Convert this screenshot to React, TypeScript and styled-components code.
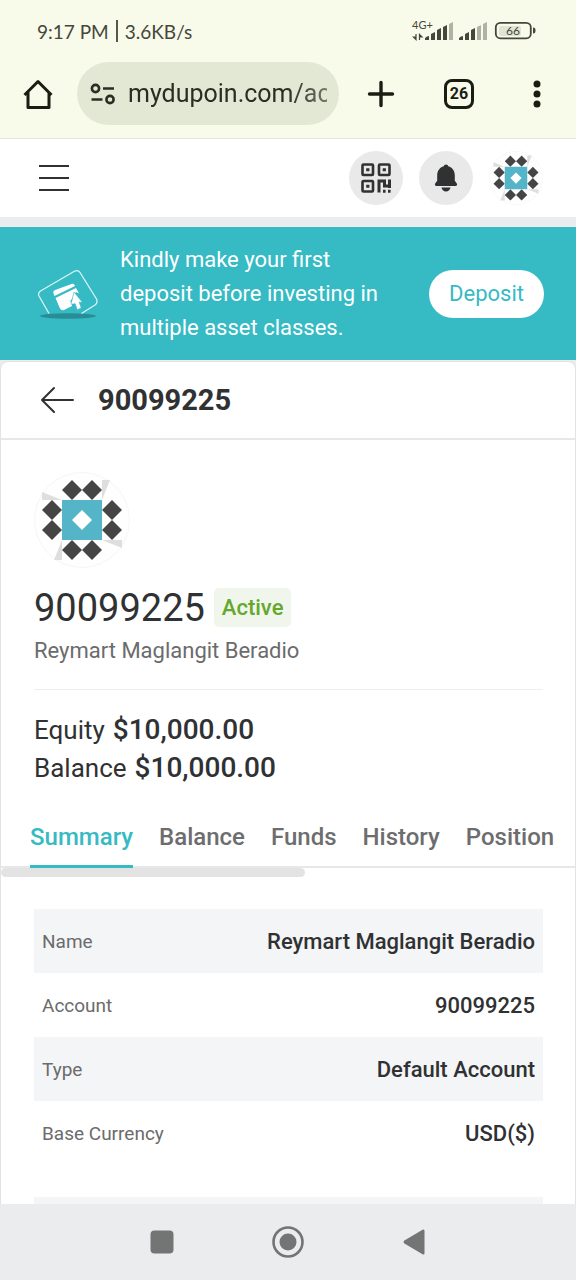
import React, { useState } from "react";
import styled, { createGlobalStyle } from "styled-components";

const GlobalStyle = createGlobalStyle`
  *, *::before, *::after { box-sizing: border-box; }
  body {
    margin: 0;
    font-family: Roboto, "Liberation Sans", sans-serif;
    color: #303133;
    background: #ebecee;
  }
  button { font-family: inherit; padding: 0; border: 0; background: none; color: inherit; cursor: pointer; }
  h1, h2, p { margin: 0; }
  svg { display: block; }
`;

const teal = "#36bac4";

const Screen = styled.div`
  height: 100vh;
  display: flex;
  flex-direction: column;
`;

const BrowserChrome = styled.header`
  background: #f8faea;
  border-bottom: 1px solid #e4e6dc;
  color: #1b1d12;
`;

const StatusBar = styled.div`
  height: 62px;
  padding: 0 40px 0 37px;
  display: flex;
  align-items: center;
  justify-content: space-between;
  font-family: Lato, sans-serif;
  font-size: 19px;
  color: #45473c;
`;

const Clock = styled.div`
  display: flex;
  align-items: center;
  gap: 7px;
`;

const ClockRule = styled.span`
  width: 2px;
  height: 22px;
  background: #55574c;
`;

const AddressRow = styled.div`
  display: flex;
  align-items: center;
  padding: 0 23px 13px 22px;
`;

const IconButton = styled.button`
  width: 32px;
  height: 32px;
  display: grid;
  place-items: center;
`;

const AddressPill = styled.div`
  flex: 1;
  min-width: 0;
  height: 63px;
  margin: 0 26px 0 23px;
  padding: 0 12px 0 13px;
  border-radius: 32px;
  background: #e3e8d5;
  display: flex;
  align-items: center;
  gap: 12px;
`;

const AddressInput = styled.input`
  flex: 1;
  min-width: 0;
  padding: 0;
  border: 0;
  outline: 0;
  background: none;
  font-family: Roboto, sans-serif;
  font-size: 25px;
  color: #2b2d22;
  mask-image: linear-gradient(to right, #000 80%, rgba(0, 0, 0, 0.6));
`;

const BrowserActions = styled.div`
  display: flex;
  gap: 46px;
`;

const TabCount = styled.button`
  width: 30px;
  height: 30px;
  margin: 1px;
  border: 3px solid #1b1d12;
  border-radius: 8px;
  font-size: 16px;
  font-weight: 700;
  line-height: 24px;
`;

const Page = styled.main`
  flex: 1;
  min-height: 0;
  overflow-y: auto;
  scrollbar-width: none;
`;

const SiteHeader = styled.div`
  height: 78px;
  padding: 0 33px 0 38px;
  display: flex;
  align-items: center;
  justify-content: space-between;
  background: #fff;
`;

const HeaderActions = styled.div`
  display: flex;
  gap: 16px;
`;

const RoundButton = styled.button<{ $plain?: boolean }>`
  width: 54px;
  height: 54px;
  border-radius: 50%;
  background: ${(p) => (p.$plain ? "none" : "#e9e9e9")};
  display: grid;
  place-items: center;
`;

const Banner = styled.section`
  margin-top: 10px;
  min-height: 133px;
  padding: 0 32px 0 38px;
  display: flex;
  align-items: center;
  background: ${teal};
`;

const BannerText = styled.p`
  flex: 1;
  margin: 0 24px 0 22px;
  font-size: 22px;
  line-height: 34px;
  color: #fff;
`;

const DepositButton = styled.button`
  width: 115px;
  height: 48px;
  border-radius: 24px;
  background: #fff;
  color: ${teal};
  font-size: 22px;
`;

const Card = styled.section`
  margin-top: 1px;
  background: #fff;
  border: 1px solid #e2e3e5;
  border-radius: 8px 8px 0 0;
  padding-bottom: 32px;
`;

const CardHeader = styled.div`
  height: 78px;
  padding: 0 39px;
  display: flex;
  align-items: center;
  gap: 26px;
  border-bottom: 2px solid #e6e7e9;
`;

const CardTitle = styled.h1`
  font-size: 29px;
  font-weight: 700;
`;

const Profile = styled.div`
  padding: 32px 32px 0 33px;
`;

const AccountLine = styled.div`
  display: flex;
  align-items: center;
  gap: 9px;
  height: 39px;
  margin-top: 20px;
`;

const AccountNumber = styled.h2`
  font-size: 38px;
  font-weight: 400;
`;

const StatusBadge = styled.span`
  padding: 0 8px;
  border-radius: 5px;
  background: #f1f6ec;
  color: #64a82c;
  font-size: 22px;
  font-weight: 500;
  line-height: 39px;
`;

const Holder = styled.p`
  padding: 8px 0 22px;
  border-bottom: 1px solid #eeeeef;
  font-size: 22px;
  line-height: 32px;
  color: #6b6b6c;
`;

const Figures = styled.dl`
  margin: 21px 0 0;
`;

const Figure = styled.div`
  display: flex;
  align-items: baseline;
  gap: 8px;
  font-size: 26px;
  line-height: 38px;
  dt { margin: 0; }
  dd { margin: 0; font-size: 28px; font-weight: 500; }
`;

const Tabs = styled.div`
  margin-top: 21px;
  padding: 0 29px;
  height: 60px;
  display: flex;
  gap: 26px;
  border-bottom: 2px solid #e6e7e9;
`;

const Tab = styled.button<{ $active: boolean }>`
  flex: none;
  height: 60px;
  border-bottom: 3px solid ${(p) => (p.$active ? teal : "transparent")};
  color: ${(p) => (p.$active ? teal : "#6d6d6e")};
  font-size: 24px;
  font-weight: 500;
`;

const ScrollThumb = styled.div`
  width: 53%;
  height: 9px;
  border-radius: 5px;
  background: #e3e3e3;
`;

const Details = styled.table`
  width: calc(100% - 65px);
  margin: 32px 32px 0 33px;
  border-collapse: collapse;
  tr { height: 64px; }
  tr:nth-child(odd) { background: #f4f5f7; }
  th, td { padding: 0 8px; }
  th { text-align: left; font-size: 19px; font-weight: 400; color: #6b6b6c; }
  td { text-align: right; font-size: 22px; font-weight: 500; }
`;

const SystemNav = styled.nav`
  height: 76px;
  display: flex;
  align-items: center;
  justify-content: center;
  gap: 94px;
  background: #ebecee;
  color: #737574;
`;

const StatusIcons = () => (
  <svg width="125" height="24" viewBox="0 0 125 24" role="img" aria-label="Mobile signal and battery">
    <g fill="#45473c" fontFamily="Lato, sans-serif">
      <text x="1" y="10" fontSize="11">4G+</text>
      <path d="M5 15v5.500L2.500 18H5M8.500 21v-5.500l2.500 2.500H8.500" stroke="#45473c" strokeWidth="1.200" />
      <path d="M14 21v-2q2-2 4-2v4zM20 21v-6l4-2v8zM26 21V11l4-2v12zM32 21V8l4-2v15z" />
      <path d="M38 21V5l4-2v18z" opacity="0.4" />
      <path d="M48 21v-2q2-2 4-2v4zM54 21v-6l4-2v8zM60 21V11l4-2v12z" />
      <path d="M66 21V8l4-2v15zM72 21V5l4-2v18z" opacity="0.4" />
      <text x="102" y="16" fontSize="12" textAnchor="middle">66</text>
    </g>
    <rect x="88" y="7" width="22" height="10" rx="2" fill="#45473c" opacity="0.12" />
    <rect x="84.800" y="3.800" width="35" height="15.500" rx="4.500" fill="none" stroke="#45473c" strokeWidth="1.800" />
    <path d="M122 8.500c2 0 2.500 1 2.500 3s-.5 3-2.500 3z" fill="#45473c" />
  </svg>
);

const HomeIcon = () => (
  <svg width="32" height="32" viewBox="0 0 32 32" fill="none" stroke="#1b1d12" strokeWidth="3" strokeLinejoin="round">
    <path d="M2.500 17 16 3.500 29.500 17M6 14v15.500h21V14" />
  </svg>
);

const SiteSettingsIcon = () => (
  <svg width="26" height="22" viewBox="0 0 26 22" fill="none" stroke="#2b2d22" strokeWidth="2.600">
    <circle cx="5.500" cy="5.500" r="3.600" />
    <path d="M13 5.500h11M1.500 16.500h11" />
    <circle cx="20" cy="16.500" r="3.600" />
  </svg>
);

const QrIcon = () => (
  <svg width="30" height="30" viewBox="0 0 30 30" fill="none" stroke="#303133" strokeWidth="2.600">
    <rect x="1.500" y="1.500" width="10.500" height="10.500" rx="1" />
    <rect x="18" y="1.500" width="10.500" height="10.500" rx="1" />
    <rect x="1.500" y="18" width="10.500" height="10.500" rx="1" />
    <path d="M5.200 6.750h3.200M21.700 6.750h3.200M5.200 23.250h3.200" strokeWidth="3.200" />
    <path d="M18 29.500V18h5.500v5h5M28.500 16.500V25M22 28.300h2.600M27 28.300h2.600" strokeWidth="3" />
  </svg>
);

const BellIcon = () => (
  <svg width="24" height="28" viewBox="0 0 24 28" fill="#303133">
    <path d="M12 .5c1.300 0 2 .8 2.200 1.700 4.300 1.200 6.600 4.800 6.600 9v5.600l1.900 2.400c.9 1.300.2 2.800-1.200 2.800h-19C1.100 22 .4 20.500 1.300 19.200l1.900-2.400v-5.600c0-4.200 2.300-7.800 6.600-9C10 1.300 10.700.5 12 .5zM7.500 23.500h9c-.3 2.300-2.100 4-4.500 4s-4.200-1.700-4.500-4z" />
  </svg>
);

const diamonds = [[38, 18], [58, 18], [18, 38], [18, 58], [78, 38], [78, 58], [38, 78], [58, 78]];

const Identicon = ({ size }: { size: number }) => (
  <svg width={size} height={size} viewBox="0 0 96 96" role="img" aria-label="Profile picture">
    <circle cx="48" cy="48" r="47.500" fill="#fefefe" stroke="#f5f5f5" />
    {[0, 90, 180, 270].map((a) => (
      <path key={a} d="M28 28 8 20v8z" fill="#dedede" transform={`rotate(${a} 48 48)`} />
    ))}
    {diamonds.map(([x, y]) => (
      <path key={`${x}-${y}`} d={`M${x} ${y - 10}l10 10-10 10-10-10z`} fill="#454545" />
    ))}
    <path d="M28 28h40v40H28z" fill="#54b4c8" />
    <path d="M48 38l10 10-10 10-10-10z" fill="#fff" />
  </svg>
);

const DepositIcon = () => (
  <svg width="60" height="50" viewBox="0 0 60 50">
    <ellipse cx="30" cy="47" rx="28" ry="2.800" fill="#288d96" />
    <path d="M11 44.500 1 27q-1.500-3 1.500-5L36 2.500q4-2.200 6 1L58.500 30q1.500 4-1.500 6L43.500 44.500" fill="none" stroke="#d8f4f5" strokeWidth="1.300" />
    <path d="M15.500 24.500q-1-2 1-3.200L33.500 15q2-.7 3 1l.5 1-20.500 10zM17.500 29 38 19l3 5.500-3-1.500-6 10 2 .5v3.500L26 41q-2.500.8-4-1.500z" fill="#fff" />
    <path d="M36 23l8.500 10.500-3.300-.4 2 6-4 1.600-2-6-4.200.6z" fill="#fff" stroke={teal} strokeWidth="0.600" />
  </svg>
);

const rows = [
  ["Name", "Reymart Maglangit Beradio"],
  ["Account", "90099225"],
  ["Type", "Default Account"],
  ["Base Currency", "USD($)"],
];

const tabNames = ["Summary", "Balance", "Funds", "History", "Position"];

export default function App() {
  const [tab, setTab] = useState("Summary");

  return (
    <Screen>
      <GlobalStyle />
      <BrowserChrome>
        <StatusBar>
          <Clock>
            <span>9:17 PM</span>
            <ClockRule />
            <span>3.6KB/s</span>
          </Clock>
          <StatusIcons />
        </StatusBar>
        <AddressRow>
          <IconButton aria-label="Home"><HomeIcon /></IconButton>
          <AddressPill>
            <SiteSettingsIcon />
            <AddressInput aria-label="Address" defaultValue="mydupoin.com/ac" />
          </AddressPill>
          <BrowserActions>
            <IconButton aria-label="New tab">
              <svg width="28" height="28" viewBox="0 0 28 28" stroke="#1b1d12" strokeWidth="3.400" strokeLinecap="round">
                <path d="M14 2.500v23M2.500 14h23" />
              </svg>
            </IconButton>
            <TabCount aria-label="26 open tabs">26</TabCount>
            <IconButton aria-label="Browser menu">
              <svg width="8" height="28" viewBox="0 0 8 28" fill="#1b1d12">
                <circle cx="4" cy="4" r="3.500" />
                <circle cx="4" cy="14" r="3.500" />
                <circle cx="4" cy="24" r="3.500" />
              </svg>
            </IconButton>
          </BrowserActions>
        </AddressRow>
      </BrowserChrome>

      <Page>
        <SiteHeader>
          <IconButton aria-label="Open menu">
            <svg width="32" height="28" viewBox="0 0 32 28" stroke="#303133" strokeWidth="2.200">
              <path d="M1 2h30M1 14h30M1 26h30" />
            </svg>
          </IconButton>
          <HeaderActions>
            <RoundButton aria-label="QR code"><QrIcon /></RoundButton>
            <RoundButton aria-label="Notifications"><BellIcon /></RoundButton>
            <RoundButton $plain aria-label="Profile"><Identicon size={54} /></RoundButton>
          </HeaderActions>
        </SiteHeader>

        <Banner>
          <DepositIcon />
          <BannerText>Kindly make your first deposit before investing in multiple asset classes.</BannerText>
          <DepositButton>Deposit</DepositButton>
        </Banner>

        <Card>
          <CardHeader>
            <IconButton aria-label="Back">
              <svg width="34" height="28" viewBox="0 0 34 28" fill="none" stroke="#303133" strokeWidth="2" strokeLinecap="round" strokeLinejoin="round">
                <path d="M14 2 2 14l12 12M2 14h31" />
              </svg>
            </IconButton>
            <CardTitle>90099225</CardTitle>
          </CardHeader>

          <Profile>
            <Identicon size={96} />
            <AccountLine>
              <AccountNumber>90099225</AccountNumber>
              <StatusBadge>Active</StatusBadge>
            </AccountLine>
            <Holder>Reymart Maglangit Beradio</Holder>
            <Figures>
              <Figure><dt>Equity</dt><dd>$10,000.00</dd></Figure>
              <Figure><dt>Balance</dt><dd>$10,000.00</dd></Figure>
            </Figures>
          </Profile>

          <Tabs role="tablist">
            {tabNames.map((name) => (
              <Tab key={name} role="tab" aria-selected={tab === name} $active={tab === name} onClick={() => setTab(name)}>
                {name}
              </Tab>
            ))}
          </Tabs>
          <ScrollThumb />

          <Details>
            <tbody>
              {rows.map(([label, value]) => (
                <tr key={label}>
                  <th scope="row">{label}</th>
                  <td>{value}</td>
                </tr>
              ))}
            </tbody>
          </Details>
          <Details>
            <tbody>
              <tr><td /></tr>
            </tbody>
          </Details>
        </Card>
      </Page>

      <SystemNav aria-label="System navigation">
        <IconButton aria-label="Recent apps">
          <svg width="24" height="24" viewBox="0 0 24 24" fill="currentColor"><rect x="0.500" y="0.500" width="23" height="23" rx="4" /></svg>
        </IconButton>
        <IconButton aria-label="Home screen">
          <svg width="32" height="32" viewBox="0 0 32 32">
            <circle cx="16" cy="16" r="14.500" fill="none" stroke="currentColor" strokeWidth="2.600" />
            <circle cx="16" cy="16" r="8.500" fill="currentColor" />
          </svg>
        </IconButton>
        <IconButton aria-label="Go back">
          <svg width="22" height="26" viewBox="0 0 22 26" fill="currentColor"><path d="M20 .5q1.500-.5 1.500 1.500v22q0 2-1.500 1.500L1 14.200q-1-1.200 0-2.400z" /></svg>
        </IconButton>
      </SystemNav>
    </Screen>
  );
}
